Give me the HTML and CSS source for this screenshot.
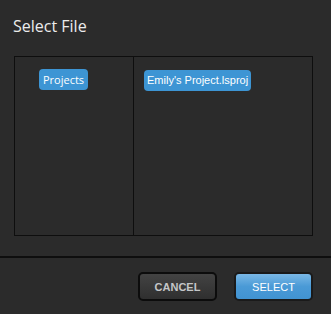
FILE: index.html
```html
<!DOCTYPE html>
<html lang="en">
<head>
    <meta charset="UTF-8">
    <meta name="viewport" content="width=device-width, initial-scale=1.0">
    <title>Select File</title>
    <link rel="stylesheet" href="styles.css">
</head>
<body>
    <div class="dialog">
        <h1 class="dialog-title">Select File</h1>
        <div class="browser">
            <div class="column column-dirs">
                <span class="chip chip-dir">Projects</span>
            </div>
            <div class="column column-files">
                <span class="chip chip-file">Emily's Project.lsproj</span>
            </div>
        </div>
        <div class="footer">
            <button class="btn btn-cancel">CANCEL</button>
            <button class="btn btn-select">SELECT</button>
        </div>
    </div>
</body>
</html>
```

FILE: styles.css
```css
html, body { margin: 0; padding: 0; background: #2b2b2b; }
body { font-family: "Open Sans", sans-serif; width: 331px; height: 314px; overflow: hidden; }
.dialog { display: flex; flex-direction: column; height: 314px; }
.dialog-title { margin: 0; padding: 15px 14px 0 13px; height: 56px; box-sizing: border-box; font-size: 16px; font-weight: normal; color: #ececec; line-height: 22px; }
.browser { display: flex; margin: 0 18px 0 14px; height: 180px; border: 1px solid #0e0e0e; box-sizing: border-box; }
.column { padding: 10px; }
.column-dirs { width: 119px; box-sizing: border-box; padding-left: 24px; border-right: 1px solid #0e0e0e; }
.column-files { flex: 1; }
.chip { display: inline-block; background: #3d95d4; color: #fff; border-radius: 4px; height: 21px; line-height: 21px; padding: 0 4px; }
.chip-dir { font-family: "Open Sans", sans-serif; font-size: 11px; }
.chip-file { font-family: "Liberation Sans", Arial, sans-serif; font-size: 11px; padding: 0 3px; }
.footer { margin-top: 20px; border-top: 2px solid #0e0e0e; display: flex; justify-content: flex-end; gap: 17px; padding: 14px 18px 0 0; }
.btn { width: 79px; height: 29px; border: 2px solid #0c0c0c; border-radius: 5px; font-family: "Liberation Sans", Arial, sans-serif; font-size: 11px; font-weight: bold; cursor: pointer; }
.btn-cancel { background: linear-gradient(#434343, #2f2f2f); color: #c4c6c8; }
.btn-select { background: linear-gradient(#7ab8e6, #4a9ad6 50%, #4193d2); color: #fff; font-weight: normal; border-color: #1a1a1a; }
```
